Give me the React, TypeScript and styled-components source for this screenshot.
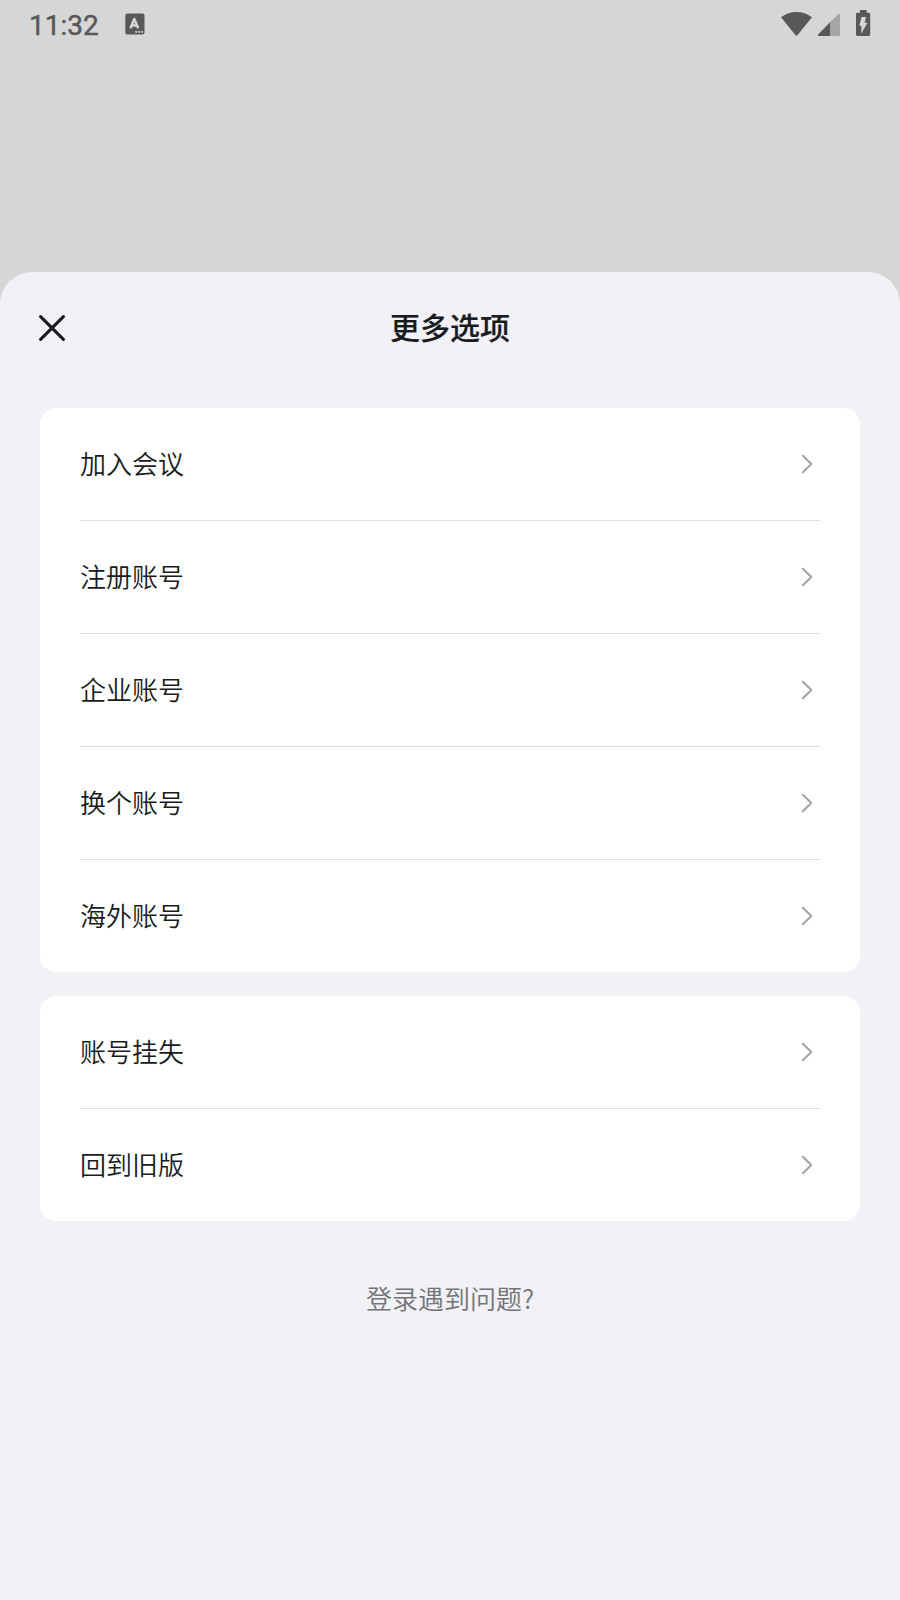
import React from "react";
import styled, { createGlobalStyle } from "styled-components";

const Global = createGlobalStyle`
  * { box-sizing: border-box; }
  body {
    margin: 0;
    background: #d6d6d6;
    font-family: "Noto Sans CJK SC", "Noto Sans", sans-serif;
    color: #181b20;
    -webkit-font-smoothing: antialiased;
  }
`;

const Screen = styled.div`
  width: 900px;
  height: 1600px;
  display: flex;
  flex-direction: column;
  overflow: hidden;
`;

const StatusBar = styled.div`
  flex: none;
  height: 272px;
  padding: 0 29px 0 28px;
  display: flex;
  align-items: flex-start;
  justify-content: space-between;
`;

const StatusGroup = styled.div`
  display: flex;
  align-items: center;
  height: 48px;
`;

const Clock = styled.span`
  font: 400 28px/54px Roboto, sans-serif;
  -webkit-text-stroke: 0.45px #585858;
  color: #585858;
  height: 50px;
  width: 97px;
  padding-left: 1px;
`;

const Sheet = styled.main`
  flex: 1;
  background: #f1f1f6;
  border-radius: 32px 32px 0 0;
  padding: 0 40px;
`;

const Header = styled.header`
  height: 136px;
  padding-bottom: 24px;
  display: grid;
  grid-template-columns: 24px 1fr 24px;
  align-items: center;
`;

const CloseButton = styled.button`
  border: 0;
  padding: 0;
  margin-left: -2px;
  background: none;
  width: 28px;
  height: 28px;
`;

const Title = styled.h1`
  margin: 0;
  padding-bottom: 4px;
  text-align: center;
  font-size: 30px;
  line-height: 44px;
  font-weight: 500;
  -webkit-text-stroke: 0.2px #181b20;
`;

const Card = styled.section`
  background: #fff;
  border-radius: 16px;
  padding: 0 40px;
  & + & { margin-top: 24px; }
`;

const Row = styled.div`
  height: 112px;
  display: flex;
  align-items: center;
  justify-content: space-between;
  & + & {
    height: 113px;
    border-top: 1px solid #dedfe0;
  }
`;

const Label = styled.span`
  padding-bottom: 2px;
  font-size: 26px;
  line-height: 38px;
  font-weight: 350;
`;

const Chevron = styled.svg`
  display: block;
  margin-right: 6px;
`;

const Help = styled.a`
  display: block;
  margin-top: 58px;
  text-align: center;
  font-size: 26px;
  line-height: 38px;
  font-weight: 350;
  color: #737477;
`;

const groups = [
  ["加入会议", "注册账号", "企业账号", "换个账号", "海外账号"],
  ["账号挂失", "回到旧版"],
];

export default function App() {
  return (
    <Screen>
      <Global />
      <StatusBar>
        <StatusGroup>
          <Clock>11:32</Clock>
          <svg width="20" height="22" viewBox="0 0 20 22">
            <rect x="0.3" y="0.5" width="19.2" height="21" rx="2" fill="#585858" />
            <path d="M5.4 15.2 L9.3 6 L13.2 15.2 M7 12.4 H11.7" fill="none" stroke="#d6d6d6" strokeWidth="2.5" strokeLinejoin="round" />
            <path d="M10.3 18h1.8v1.8h-1.8z M13.2 18h1.8v1.8h-1.8z M16.1 18h1.8v1.8h-1.8z" fill="#d6d6d6" />
          </svg>
        </StatusGroup>
        <StatusGroup>
          <svg width="92" height="48" viewBox="779 0 92 48">
            <path d="M781 17.2 Q788 12 796.5 12 Q805 12 812 17.2 L797.6 35 Q796.5 36.2 795.4 35 Z" fill="#585858" />
            <path d="M830 22.2 L838.4 14.2 Q840 13 840 14.8 V35 Q840 36 839 36 H830 Z" fill="#a5a5a5" />
            <path d="M830 22.2 V36 H819 Q817 36 818.4 34.2 Z" fill="#585858" />
            <path d="M860 10h6.6v2.8h2.2q1.4 0 1.4 1.4v20.3q0 1.5-1.5 1.5h-11.2q-1.5 0-1.5-1.5v-20.3q0-1.4 1.4-1.4h2.6z" fill="#585858" />
            <path d="M861.6 17h4.6l-1.7 5.8h3l-6.2 10.8v-7.8h-2z" fill="#d6d6d6" />
          </svg>
        </StatusGroup>
      </StatusBar>
      <Sheet>
        <Header>
          <CloseButton aria-label="关闭">
            <svg width="28" height="28" viewBox="0 0 28 28" display="block">
              <path d="M2.6 2.6 L25.4 25.4 M25.4 2.6 L2.6 25.4" stroke="#181b20" strokeWidth="3.1" strokeLinecap="round" />
            </svg>
          </CloseButton>
          <Title>更多选项</Title>
        </Header>
        {groups.map((rows) => (
          <Card key={rows[0]}>
            {rows.map((label) => (
              <Row key={label}>
                <Label>{label}</Label>
                <Chevron width="14" height="20" viewBox="0 0 14 20">
                  <path d="M2.9 1.8 L11.3 10 L2.9 18.2" fill="none" stroke="#a3a4a5" strokeWidth="2.1" strokeLinecap="round" strokeLinejoin="round" />
                </Chevron>
              </Row>
            ))}
          </Card>
        ))}
        <Help>登录遇到问题?</Help>
      </Sheet>
    </Screen>
  );
}
